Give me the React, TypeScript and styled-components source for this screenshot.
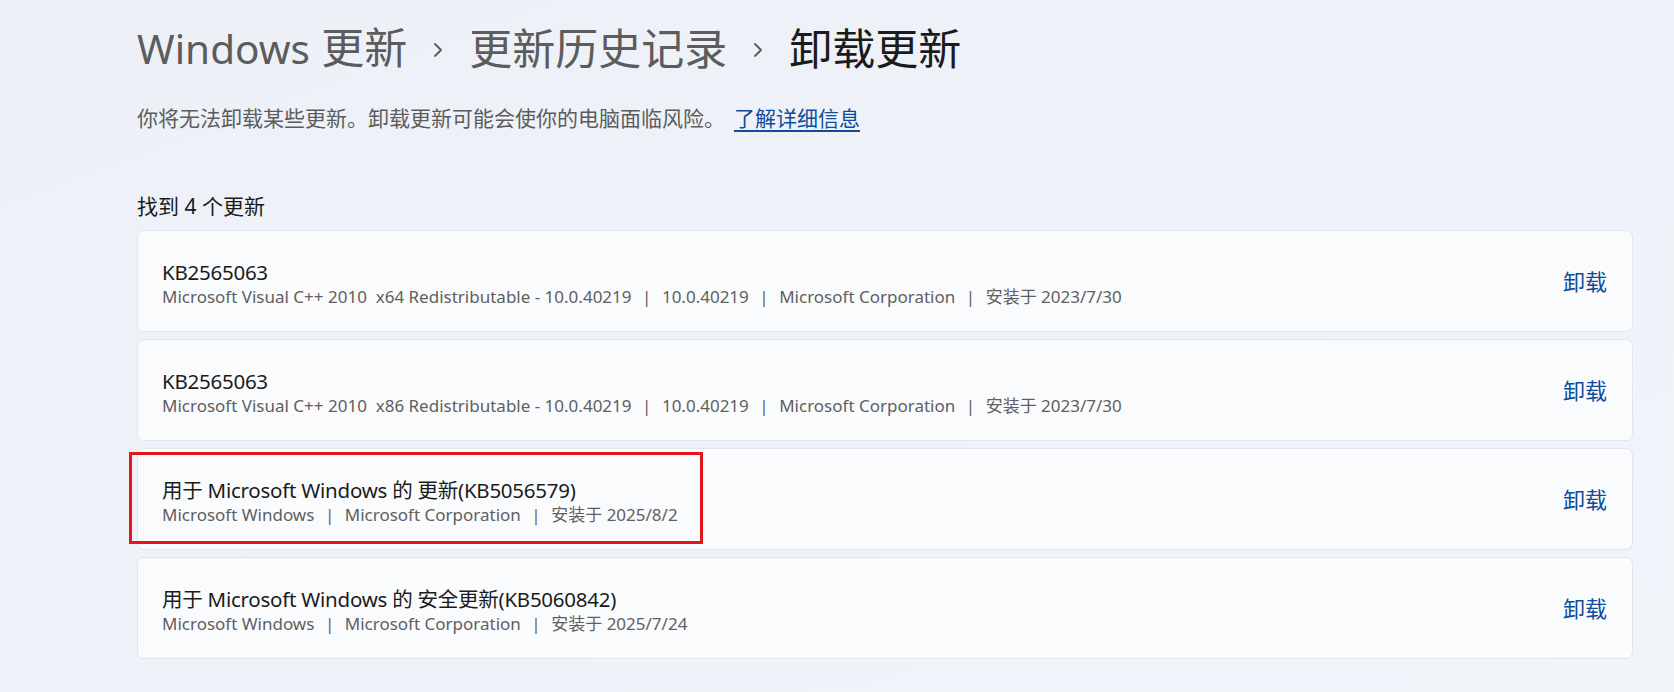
import styled, { createGlobalStyle } from "styled-components";

const GlobalStyle = createGlobalStyle`
  html, body {
    margin: 0;
    padding: 0;
  }
  body {
    min-height: 692px;
    background: linear-gradient(160deg, #edf1f7 0%, #eff3f9 55%, #f1f4f9 100%);
    font-family: "Segoe UI", "Noto Sans", "Noto Sans CJK SC", sans-serif;
    color: #1b1b1b;
  }
`;

const Page = styled.main`
  padding: 20px 41px 0 137px;
  display: flex;
  flex-direction: column;
`;

const Breadcrumb = styled.h1`
  margin: 0;
  display: flex;
  align-items: center;
  font-size: 43px;
  line-height: 56px;
  font-weight: 400;
  white-space: nowrap;
`;

const Crumb = styled.span<{ current?: boolean }>`
  color: ${({ current }) => (current ? "#1b1b1b" : "#5c5c5c")};
`;

// latin part of a crumb runs a touch smaller than the CJK glyphs
const Latin = styled.span`
  font-size: 40.5px;
`;

const Chevron = styled.svg`
  width: 10px;
  height: 14px;
  margin: 2px 26px 0 26px;
  flex-shrink: 0;
`;

const Intro = styled.p`
  margin: 27px 0 0;
  font-size: 21px;
  line-height: 28px;
  color: #5c5c5c;
`;

const LearnMore = styled.a`
  margin-left: 9px;
  color: #0f4c9c;
  text-decoration: underline;
  text-underline-offset: 4px;
  cursor: pointer;
`;

const Count = styled.h2`
  margin: 60px 0 10px;
  font-size: 21px;
  line-height: 28px;
  font-weight: 400;
  color: #1b1b1b;
`;

const List = styled.div`
  display: flex;
  flex-direction: column;
  gap: 7px;
`;

const Card = styled.div`
  position: relative;
  box-sizing: border-box;
  min-height: 102px;
  display: flex;
  align-items: center;
  padding: 0 25px 0 24px;
  background: #fafbfd;
  border: 1px solid #e2e6eb;
  border-radius: 7px;
`;

// red frame drawn over the highlighted entry
const Highlight = styled.div`
  position: absolute;
  left: -9px;
  top: 3px;
  width: 574px;
  height: 92px;
  box-sizing: border-box;
  border: 3px solid #e8141c;
  pointer-events: none;
`;

const Info = styled.div`
  flex: 1;
  display: flex;
  flex-direction: column;
  margin-top: 6px;
`;

const Name = styled.div`
  font-size: 20.5px;
  line-height: 26px;
  letter-spacing: -0.25px;
  color: #1b1b1b;
`;

const Details = styled.div`
  font-size: 17px;
  line-height: 24px;
  color: #5f5f5f;
  white-space: pre;
`;

const Sep = styled.span`
  margin: 0 10.5px;
`;

const Uninstall = styled.button`
  border: none;
  background: none;
  padding: 0;
  font-family: inherit;
  font-size: 22px;
  line-height: 28px;
  color: #0f4c9c;
  cursor: pointer;
`;

type Update = {
  name: string;
  details: string[];
  highlighted?: boolean;
};

const updates: Update[] = [
  {
    name: "KB2565063",
    details: [
      "Microsoft Visual C++ 2010  x64 Redistributable - 10.0.40219",
      "10.0.40219",
      "Microsoft Corporation",
      "安装于 2023/7/30",
    ],
  },
  {
    name: "KB2565063",
    details: [
      "Microsoft Visual C++ 2010  x86 Redistributable - 10.0.40219",
      "10.0.40219",
      "Microsoft Corporation",
      "安装于 2023/7/30",
    ],
  },
  {
    name: "用于 Microsoft Windows 的 更新(KB5056579)",
    details: ["Microsoft Windows", "Microsoft Corporation", "安装于 2025/8/2"],
    highlighted: true,
  },
  {
    name: "用于 Microsoft Windows 的 安全更新(KB5060842)",
    details: ["Microsoft Windows", "Microsoft Corporation", "安装于 2025/7/24"],
  },
];

const ChevronIcon = () => (
  <Chevron viewBox="0 0 10 14" fill="none">
    <path d="M2 1 L8 7 L2 13" stroke="#5c5c5c" strokeWidth="1.8" strokeLinecap="round" strokeLinejoin="round" />
  </Chevron>
);

const App = () => {
  return (
    <>
      <GlobalStyle />
      <Page>
        <Breadcrumb>
          <Crumb>
            <Latin>Windows</Latin> 更新
          </Crumb>
          <ChevronIcon />
          <Crumb>更新历史记录</Crumb>
          <ChevronIcon />
          <Crumb current>卸载更新</Crumb>
        </Breadcrumb>

        <Intro>
          你将无法卸载某些更新。卸载更新可能会使你的电脑面临风险。
          <LearnMore>了解详细信息</LearnMore>
        </Intro>

        <Count>找到 4 个更新</Count>

        <List>
          {updates.map((u, i) => (
            <Card key={i}>
              <Info>
                <Name>{u.name}</Name>
                <Details>
                  {u.details.map((d, j) => (
                    <span key={j}>
                      {j > 0 && <Sep>|</Sep>}
                      {d}
                    </span>
                  ))}
                </Details>
              </Info>
              <Uninstall>卸载</Uninstall>
              {u.highlighted && <Highlight />}
            </Card>
          ))}
        </List>
      </Page>
    </>
  );
};

export default App;
